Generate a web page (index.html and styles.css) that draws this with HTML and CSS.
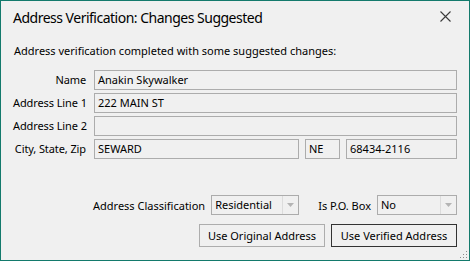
FILE: index.html
```html
<!DOCTYPE html>
<html>
<head>
<meta charset="utf-8">
<link rel="stylesheet" href="styles.css">
</head>
<body>
<div class="window">
  <div class="titlebar">
    <span class="title">Address Verification: Changes Suggested</span>
    <svg class="close" width="12" height="12" viewBox="0 0 12 12"><path d="M0.5 0.5 L10.5 10.5 M10.5 0.5 L0.5 10.5" stroke="#3a3a3a" stroke-width="1.1" fill="none"/></svg>
  </div>
  <div class="message">Address verification completed with some suggested changes:</div>
  <div class="form">
    <label class="lbl">Name</label>
    <div class="field">Anakin Skywalker</div>
    <label class="lbl">Address Line 1</label>
    <div class="field">222 MAIN ST</div>
    <label class="lbl">Address Line 2</label>
    <div class="field"></div>
    <label class="lbl">City, State, Zip</label>
    <div class="csz">
      <div class="field city">SEWARD</div>
      <div class="field state">NE</div>
      <div class="field zip">68434-2116</div>
    </div>
  </div>
  <div class="bottom">
    <div class="options">
      <span class="optlbl">Address Classification</span>
      <div class="select sel-class"><span class="seltext">Residential</span><span class="arrow"><svg width="7" height="4" viewBox="0 0 7 4"><path d="M0 0 H7 L3.5 4 Z" fill="#b4b4b4"/></svg></span></div>
      <span class="optlbl pobox">Is P.O. Box</span>
      <div class="select sel-po"><span class="seltext">No</span><span class="arrow"><svg width="7" height="4" viewBox="0 0 7 4"><path d="M0 0 H7 L3.5 4 Z" fill="#b4b4b4"/></svg></span></div>
    </div>
    <div class="buttons">
      <button class="btn">Use Original Address</button>
      <button class="btn default">Use Verified Address</button>
    </div>
  </div>
  <svg class="grip" width="8" height="8" viewBox="0 0 8 8">
    <rect x="6" y="0" width="1" height="1" fill="#8a8a8a"/>
    <rect x="3" y="3" width="1" height="1" fill="#8a8a8a"/>
    <rect x="6" y="3" width="1" height="1" fill="#8a8a8a"/>
    <rect x="0" y="6" width="1" height="1" fill="#8a8a8a"/>
    <rect x="3" y="6" width="1" height="1" fill="#8a8a8a"/>
    <rect x="6" y="6" width="1" height="1" fill="#8a8a8a"/>
  </svg>
</div>
</body>
</html>
```
FILE: styles.css
```css
html, body {
  margin: 0;
  padding: 0;
  background: #f0f0f0;
}
.window {
  position: relative;
  box-sizing: border-box;
  width: 470px;
  height: 261px;
  border: 1px solid #137a6c;
  background: #f0f0f0;
  font-family: "Noto Sans", "Open Sans", sans-serif;
  font-size: 11px;
  color: #000;
  display: flex;
  flex-direction: column;
  padding: 0 12px 13px 12px;
}
.titlebar {
  height: 31px;
  display: flex;
  align-items: center;
  justify-content: space-between;
}
.title {
  font-size: 14px;
  letter-spacing: -0.5px;
  margin-top: 1px;
}
.close {
  margin-right: 5px;
}
.message {
  margin-top: 11px;
  line-height: 16px;
  padding-left: 1px;
}
.form {
  margin-top: 11px;
  display: grid;
  grid-template-columns: 73px 1fr;
  column-gap: 8px;
  row-gap: 3px;
}
.lbl {
  text-align: right;
  line-height: 20px;
  white-space: nowrap;
  letter-spacing: -0.1px;
}
.field {
  box-sizing: border-box;
  height: 20px;
  border: 1px solid #acacac;
  padding: 0 3px;
  line-height: 18px;
  white-space: nowrap;
}
.csz {
  display: flex;
}
.city { width: 205px; }
.state { width: 35px; margin-left: 6px; }
.zip { flex: 1; margin-left: 6px; }
.bottom {
  margin-top: auto;
  display: flex;
  flex-direction: column;
  align-items: flex-end;
}
.options {
  display: flex;
  align-items: center;
}
.optlbl {
  margin-right: 6px;
}
.pobox {
  margin-left: 19px;
}
.select {
  box-sizing: border-box;
  height: 20px;
  border: 1px solid #acacac;
  display: flex;
}
.seltext {
  flex: 1;
  padding-left: 3px;
  line-height: 18px;
}
.arrow {
  width: 15px;
  border-left: 1px solid #dcdcdc;
  display: flex;
  align-items: center;
  justify-content: center;
}
.sel-class { width: 88px; }
.sel-po { width: 80px; }
.buttons {
  margin-top: 9px;
  display: flex;
  gap: 6px;
}
.btn {
  box-sizing: border-box;
  width: 126px;
  height: 23px;
  border: 1px solid #adadad;
  background: #f0f0f0;
  font-family: inherit;
  font-size: 11px;
  color: #000;
  padding: 0;
}
.btn.default {
  border: 1px solid #333;
}
.grip {
  position: absolute;
  right: 1px;
  bottom: 1px;
}
```
